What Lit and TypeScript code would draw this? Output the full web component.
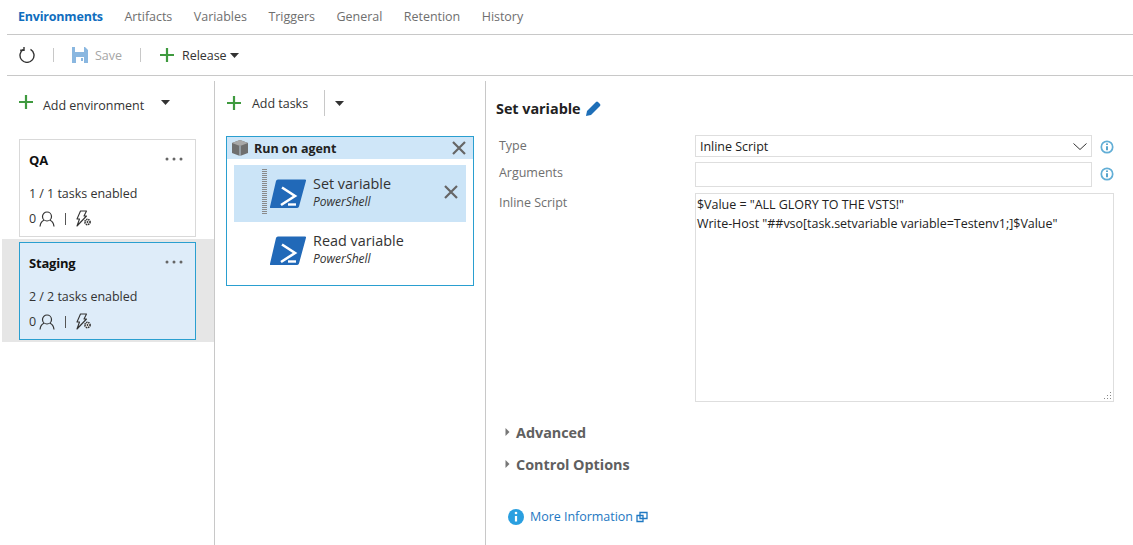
import { LitElement, html, css } from "lit";
import { customElement } from "lit/decorators.js";

const plus = html`<svg class="plus" viewBox="0 0 14 14" width="14" height="14"><path d="M7 0v14M0 7h14" stroke="#3f9a3f" stroke-width="2.200" fill="none"/></svg>`;
const caret = html`<svg class="caret" viewBox="0 0 9 5" width="9" height="5"><path d="M0 0h9L4.500 5z" fill="#333"/></svg>`;
const person = html`<svg viewBox="0 0 16 16" width="16" height="16"><circle cx="8" cy="5.500" r="4.500" fill="none" stroke="#333" stroke-width="1.200"/><path d="M1 15.500c.5-3.800 2.800-5.800 4-6.200M15 15.500c-.5-3.800-2.800-5.800-4-6.200" fill="none" stroke="#333" stroke-width="1.200"/></svg>`;
const bolt = html`<svg viewBox="0 0 17 17" width="17" height="17"><path d="M5.500 1h6L9 6h2.500L2 16l2.500-7H2z" fill="none" stroke="#333" stroke-width="1.100" stroke-linejoin="round"/><circle cx="12.500" cy="12" r="2.600" fill="#fff" stroke="#333" stroke-width="1.600" stroke-dasharray="1.500 .6"/><circle cx="12.500" cy="12" r=".9" fill="#333"/></svg>`;
const ps = html`<svg class="ps" viewBox="0 0 36 29" width="36" height="29"><path d="M8 0.500h27a1 1 0 0 1 1 1.200L29 27.500a2 2 0 0 1-2 1.500H1a1 1 0 0 1-1-1.300L6 2a2 2 0 0 1 2-1.500z" fill="#2169b8"/><path d="M12 8.500L25 17 11 26" fill="none" stroke="#fff" stroke-width="2.600"/><path d="M18 25.500h8" stroke="#fff" stroke-width="2.400"/></svg>`;
const close = html`<svg viewBox="0 0 14 14" width="14" height="14"><path d="M1 1l12 12M13 1L1 13" stroke="#666" stroke-width="2.200" fill="none"/></svg>`;
const info = html`<svg viewBox="0 0 14 14" width="14" height="14"><circle cx="7" cy="7" r="5.700" fill="none" stroke="#62aed6" stroke-width="1.700"/><path d="M7 6.200v4" stroke="#3a94c4" stroke-width="1.700"/><circle cx="7" cy="4.200" r=".9" fill="#3a94c4"/></svg>`;
const dots = html`<svg viewBox="0 0 18 4" width="18" height="4"><circle cx="2" cy="2" r="1.500" fill="#666"/><circle cx="9" cy="2" r="1.500" fill="#666"/><circle cx="16" cy="2" r="1.500" fill="#666"/></svg>`;
const tri = html`<svg viewBox="0 0 5 8" width="5" height="8"><path d="M0.500 0L4.500 4 .5 8z" fill="#777"/></svg>`;

@customElement("app-root")
export class AppRoot extends LitElement {
  static styles = css`
    :host { display: flex; flex-direction: column; width: 1133px; height: 545px; overflow: hidden; background: #fff;
      font-family: "Open Sans", "Noto Sans", sans-serif; font-size: 12.500px; color: #333; letter-spacing: -0.030px; }
    svg { display: block; flex: none; }
    .tabs { display: flex; margin-left: 7px; padding-left: 11px; gap: 21.500px; align-items: center; border-bottom: 1px solid #c8c8c8; color: #6f6f6f; padding-bottom: 1px; box-sizing: border-box; height: 35px; }
    .tabs .on { color: #106ebe; font-weight: 700; letter-spacing: -0.200px; }
    .tools { display: flex; height: 41px; margin-left: 7px; padding-left: 12px; box-sizing: border-box; align-items: center; border-bottom: 1px solid #c8c8c8; }
    .tools span { padding-top: 1px; }
    .sep { width: 1px; height: 14px; background: #c8c8c8; }
    .sep.a { margin: 0 18px 0 18px; }
    .sep.b { margin: 0 19px 0 18px; }
    .save { color: #a6a6a6; margin-left: 7px; }
    .rel { margin: 0 3px 0 8px; color: #333; }
    .cols { display: flex; flex: 1; min-height: 0; }
    .left { width: 215px; flex: none; box-sizing: border-box; border-right: 1px solid #c8c8c8; padding-top: 11px; margin-top: 5px; }
    .addenv { display: flex; align-items: center; padding-left: 19px; height: 20px; }
    .addenv span { margin-left: 10px; margin-top: 6px; }
    .addenv .caret { margin-left: 17px; }
    .card { width: 177px; height: 98px; box-sizing: border-box; border: 1px solid #d9d9d9; margin-left: 19px; padding: 11px 9px 0; background: #fff; }
    .qa { margin-top: 27px; margin-bottom: 2px; }
    .card .top { display: flex; justify-content: space-between; align-items: flex-start; font-weight: 700; color: #111; font-size: 13px; letter-spacing: -0.200px; }
    .card .top svg { margin: 6px 3px 0 0; }
    .card .en { margin-top: 16px; color: #333; }
    .meta { display: flex; align-items: center; margin-top: 8px; }
    .meta i { width: 1px; height: 12px; background: #555; margin: 0 9px 0 10px; }
    .meta svg:first-of-type { margin-left: 3px; }
    .band { background: #e6e6e6; margin-left: 2px; padding: 3px 0 2px; }
    .band .card { margin-left: 17px; background: #deecf9; border-color: #2a9fd0; }
    .mid { width: 271px; flex: none; box-sizing: border-box; border-right: 1px solid #c8c8c8; padding: 9px 11px 0; margin-top: 5px; }
    .addt { display: flex; align-items: center; height: 26px; padding-left: 1px; }
    .addt .plus { margin-right: 11px; }
    .addt b { font-weight: 400; }
    .addt i { width: 1px; height: 26px; background: #c8c8c8; margin: 0 10px 0 16px; }
    .phase { width: 248px; height: 150px; box-sizing: border-box; border: 1px solid #2a9fd0; margin-top: 20px; }
    .ph { height: 22px; background: #cfe6f8; display: flex; align-items: center; padding: 0 7px 0 5px; font-weight: 700; color: #222; }
    .ph span { flex: 1; margin-left: 6px; }
    .task { height: 57px; margin: 0 7px; display: flex; align-items: center; position: relative; padding-left: 36px; }
    .task.on { background: #cbe4f7; margin-top: 6px; }
    .task.on::before { content: ""; position: absolute; left: 28px; top: 4px; bottom: 8px; width: 5px;
      background: repeating-linear-gradient(#8a8a8a 0 1px, transparent 1px 2px); }
    .task .t { margin: -3px 0 0 7px; }
    .task .n { font-size: 14.400px; line-height: 18px; color: #333; letter-spacing: 0; }
    .task em { display: block; font-size: 12px; line-height: 17px; color: #333; }
    .task .x { position: absolute; right: 8px; top: 20px; }
    .right { flex: 1; min-width: 0; padding: 23px 19px 0 10px; }
    .title { display: flex; align-items: center; font-weight: 700; font-size: 14.400px; color: #222; gap: 5px; height: 19px; }
    .grid { display: grid; grid-template-columns: 199px 397px 22px; margin-top: 17px; color: #6f6f6f; }
    .fld { box-sizing: border-box; border: 1px solid #dedede; color: #222; }
    .sel { height: 22px; display: flex; align-items: center; justify-content: space-between; padding: 1px 4px 0; }
    .arg { height: 25px; margin-top: 5px; }
    .lab { padding: 2px 0 0 3px; box-sizing: border-box; }
    .scrlab { margin-top: 6px; padding-top: 1px; }
    .ico { display: flex; justify-content: flex-end; padding-top: 5px; box-sizing: border-box; }
    .scr { grid-column: 2 / 4; height: 209px; margin-top: 6px; padding: 1px; line-height: 19px; position: relative; color: #222; }
    .grip { position: absolute; right: 1px; bottom: 1px; }
    .sec { display: flex; align-items: center; font-weight: 700; font-size: 14.400px; color: #606060; margin-left: 9px; gap: 6px; height: 20px; }
    .adv { margin-top: 20px; }
    .ctl { margin-top: 12px; }
    .more { display: flex; align-items: center; color: #1e78c2; margin: 34px 0 0 12px; }
    .more span { margin: 0 3px 0 6px; }
  `;

  private task(name: string, on: boolean) {
    return html`<div class="task ${on ? "on" : ""}">${ps}<div class="t"><div class="n">${name}</div><em>PowerShell</em></div>${on ? html`<div class="x">${close}</div>` : ""}</div>`;
  }

  private card(name: string, en: string, cls: string) {
    return html`<div class="card ${cls}"><div class="top"><span>${name}</span>${dots}</div><div class="en">${en}</div>
      <div class="meta"><span>0</span>${person}<i></i>${bolt}</div></div>`;
  }

  render() {
    return html`
      <div class="tabs"><span class="on">Environments</span><span>Artifacts</span><span>Variables</span><span>Triggers</span><span>General</span><span>Retention</span><span>History</span></div>
      <div class="tools">
        <svg viewBox="0 0 16 16" width="16" height="16"><path d="M4.500 2.300a7 7 0 1 0 7 0" fill="none" stroke="#333" stroke-width="1.400"/><path d="M5 0v3.200H1.200" fill="none" stroke="#333" stroke-width="1.400"/></svg>
        <div class="sep a"></div>
        <svg viewBox="0 0 16 16" width="16" height="16"><path d="M0 0h13l3 3v13H0z" fill="#8ab7e0"/><path d="M3 0h9v5H3z" fill="#fff"/><path d="M4 10h8v6H4z" fill="#fff"/><path d="M9 11h2v3H9z" fill="#8ab7e0"/></svg>
        <span class="save">Save</span>
        <div class="sep b"></div>
        ${plus}<span class="rel">Release</span>${caret}
      </div>
      <div class="cols">
        <div class="left">
          <div class="addenv">${plus}<span>Add environment</span>${caret}</div>
          ${this.card("QA", "1 / 1 tasks enabled", "qa")}
          <div class="band">${this.card("Staging", "2 / 2 tasks enabled", "")}</div>
        </div>
        <div class="mid">
          <div class="addt">${plus}<b>Add tasks</b><i></i>${caret}</div>
          <div class="phase">
            <div class="ph"><svg viewBox="0 0 16 16" width="16" height="16"><path d="M8 0l8 3v10l-8 3-8-3V3z" fill="#6f6f6f"/><path d="M8 0l8 3-8 3-8-3z" fill="#a8a8a8"/><path d="M8 6v10" stroke="#cfe6f8" stroke-width=".8"/></svg><span>Run on agent</span>${close}</div>
            ${this.task("Set variable", true)}
            ${this.task("Read variable", false)}
          </div>
        </div>
        <div class="right">
          <div class="title">Set variable <svg viewBox="0 0 15 15" width="15" height="15"><path d="M0 15l1-5 9-9a1.500 1.500 0 0 1 2 0l2 2a1.500 1.500 0 0 1 0 2l-9 9z" fill="#1e6fb8"/></svg></div>
          <div class="grid">
            <div class="lab">Type</div>
            <div class="fld sel"><span>Inline Script</span><svg viewBox="0 0 14 7" width="14" height="7"><path d="M0.500 0.500L7 6.500 13.500 0.500" fill="none" stroke="#333"/></svg></div>
            <div class="ico">${info}</div>
            <div class="lab arg">Arguments</div>
            <div class="fld arg"></div>
            <div class="ico arg">${info}</div>
            <div class="lab scrlab">Inline Script</div>
            <div class="fld scr">$Value = "ALL GLORY TO THE VSTS!"<br>Write-Host "##vso[task.setvariable variable=Testenv1;]$Value"
              <svg class="grip" viewBox="0 0 9 9" width="9" height="9"><path d="M7 1h1v1H7zM4 4h1v1H4zM7 4h1v1H7zM1 7h1v1H1zM4 7h1v1H4zM7 7h1v1H7z" fill="#888"/></svg>
            </div>
          </div>
          <div class="sec adv">${tri}Advanced</div>
          <div class="sec ctl">${tri}Control Options</div>
          <div class="more"><svg viewBox="0 0 16 16" width="16" height="16"><circle cx="8" cy="8" r="8" fill="#2a9fe0"/><path d="M8 7v5.500" stroke="#fff" stroke-width="2.200"/><circle cx="8" cy="4" r="1.300" fill="#fff"/></svg><span>More Information</span><svg viewBox="0 0 12 12" width="12" height="12"><path d="M4 1.500h7v6H4zM1 4.500h6v6H1z" fill="#fff" stroke="#1e78c2" stroke-width="1.300"/></svg></div>
        </div>
      </div>
    `;
  }
}
